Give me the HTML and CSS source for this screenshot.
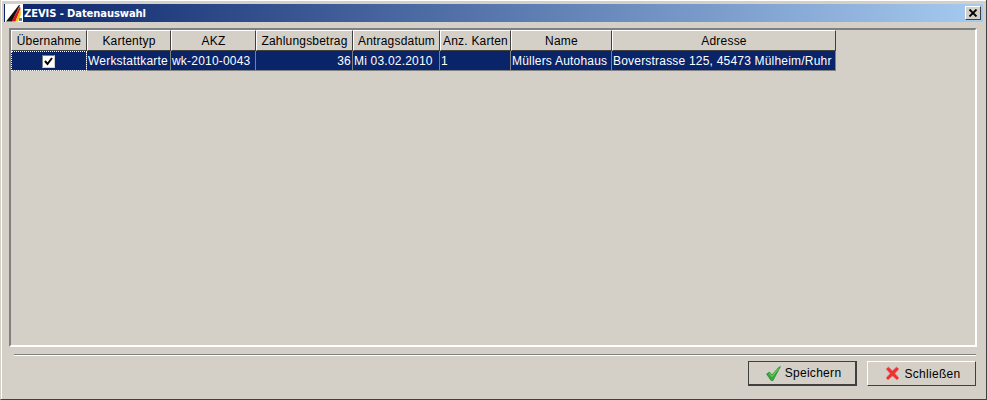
FILE: index.html
```html
<!DOCTYPE html>
<html lang="de">
<head>
<meta charset="utf-8">
<title>ZEVIS - Datenauswahl</title>
<link rel="stylesheet" href="styles.css">
</head>
<body>
<div class="window">
  <div class="titlebar">
    <svg class="logo" width="18" height="18" viewBox="0 0 18 18">
      <rect width="18" height="18" fill="#fff"/>
      <path d="M1 17.500L14 1L15 1L7 17.500Z" fill="#111"/>
      <path d="M6.500 17.500L15 2L15.500 5L10.500 17.500Z" fill="#d81818"/>
      <path d="M10.500 17.500L15.500 5L15.800 11L13 17.500Z" fill="#f0c810"/>
      <rect x="14" y="14" width="3" height="3" fill="#6a7a90"/>
    </svg>
    <span class="title">ZEVIS - Datenauswahl</span>
    <button class="close" type="button" aria-label="Schließen">
      <svg width="10" height="8" viewBox="0 0 10 8"><path d="M1.500 0.500L8.500 7.500M8.500 0.500L1.500 7.500" stroke="#000" stroke-width="1.800" fill="none"/></svg>
    </button>
  </div>
  <div class="content">
    <div class="panel">
      <table class="grid">
        <colgroup>
          <col class="c1"><col class="c2"><col class="c3"><col class="c4"><col class="c5"><col class="c6"><col class="c7"><col class="c8">
        </colgroup>
        <thead>
          <tr>
            <th>Übernahme</th><th>Kartentyp</th><th>AKZ</th><th>Zahlungsbetrag</th><th>Antragsdatum</th><th>Anz. Karten</th><th>Name</th><th>Adresse</th>
          </tr>
        </thead>
        <tbody>
          <tr>
            <td class="focus"><span class="check"><svg width="9" height="9" viewBox="0 0 9 9"><path d="M1 4L3.500 7L8 1" stroke="#000" stroke-width="2" fill="none"/></svg></span></td>
            <td>Werkstattkarte</td><td>wk-2010-0043</td><td class="num">36</td><td>Mi 03.02.2010</td><td>1</td><td>Müllers Autohaus</td><td>Boverstrasse 125, 45473 Mülheim/Ruhr</td>
          </tr>
        </tbody>
      </table>
    </div>
    <div class="separator"></div>
    <div class="actions">
      <button class="btn default" type="button">
        <svg width="15" height="15" viewBox="0 0 15 15"><path d="M0.500 8L3.500 6L6 9L12 2L14.500 0.500L7 14.500H5Z" fill="#38a838" stroke="#1f7f2a" stroke-width="0.600"/><path d="M3.500 7.500L6 10.500L12.500 2.500" stroke="#7ada6a" fill="none"/></svg>
        Speichern
      </button>
      <button class="btn" type="button">
        <svg width="15" height="15" viewBox="0 0 15 15"><path d="M1 3L3.500 1L7.500 4.800L11.500 1L14 3L10 7.500L14 12L12 14L7.500 10L3 14L1 12L5 7.500Z" fill="#ee3030" stroke="#e08080" stroke-width="0.600"/></svg>
        Schließen
      </button>
    </div>
  </div>
</div>
</body>
</html>
```
FILE: styles.css
```css
* { box-sizing: border-box; }
html, body { margin: 0; padding: 0; }
body {
  width: 987px;
  height: 400px;
  overflow: hidden;
  font-family: "Liberation Sans", Arial, sans-serif;
  font-size: 12px;
  letter-spacing: 0.2px;
  color: #000;
  background: #d4d0c8;
}
.window {
  width: 987px;
  height: 400px;
  display: flex;
  flex-direction: column;
  padding: 4px 3px 2px 3px;
  background: #d4d0c8;
  border-left: 1px solid #d4d0c8;
  border-bottom: 1px solid #404040;
  border-right: 1px solid #404040;
  box-shadow: inset 1px 1px 0 #fff;
}
.titlebar {
  height: 18px;
  display: flex;
  align-items: center;
  flex: none;
  padding-left: 1px;
  padding-right: 2px;
  background: linear-gradient(to right, #0a246a, #a6caf0);
}
.logo { flex: none; }
.title {
  margin-left: 1px;
  color: #fff;
  font-family: "DejaVu Sans", sans-serif;
  font-size: 10px;
  font-weight: bold;
  letter-spacing: -0.1px;
}
.close {
  margin-left: auto;
  width: 16px;
  height: 14px;
  padding: 0;
  display: flex;
  align-items: center;
  justify-content: center;
  background: #d4d0c8;
  border: 1px solid;
  border-color: #fff #404040 #404040 #fff;
}
.content {
  flex: 1;
  display: flex;
  flex-direction: column;
  padding: 6px 5px 0 5px;
}
.panel {
  width: 968px;
  height: 319px;
  flex: none;
  border: 2px solid;
  border-color: #808080 #fff #fff #808080;
}
.grid {
  border-collapse: separate;
  border-spacing: 0;
  table-layout: fixed;
  width: 825px;
}
.c1 { width: 76px; }
.c2 { width: 84px; }
.c3 { width: 85px; }
.c4 { width: 97px; }
.c5 { width: 87px; }
.c6 { width: 71px; }
.c7 { width: 101px; }
.c8 { width: 224px; }
th {
  height: 21px;
  padding: 0;
  font-weight: normal;
  text-align: center;
  white-space: nowrap;
  background: #d4d0c8;
  border: 1px solid;
  border-color: #fff #404040 #404040 #fff;
}
td {
  height: 20px;
  padding: 0 0 0 1px;
  color: #fff;
  white-space: nowrap;
  overflow: hidden;
  background: #0a246a;
  border-right: 1px solid #808080;
  border-bottom: 1px solid #808080;
}
td.num { text-align: right; padding-right: 1px; }
td.focus {
  padding: 0;
  text-align: center;
  outline: 1px dotted #fff;
  outline-offset: -1px;
}
.check {
  display: inline-flex;
  align-items: center;
  justify-content: center;
  width: 13px;
  height: 13px;
  vertical-align: middle;
  background: #fff;
  border: 1px solid;
  border-color: #808080 #d4d0c8 #d4d0c8 #808080;
}
.separator {
  flex: none;
  width: 962px;
  height: 2px;
  margin: 7px 0 0 5px;
  background: #808080;
  border-bottom: 1px solid #fff;
}
.actions {
  flex: none;
  display: flex;
  justify-content: flex-end;
  gap: 10px;
  padding: 5px 2px 0 0;
}
.btn {
  width: 109px;
  height: 25px;
  padding: 0 0 0 3px;
  display: flex;
  align-items: center;
  justify-content: center;
  gap: 4px;
  font: inherit;
  letter-spacing: 0.3px;
  color: #000;
  background: #d4d0c8;
  border: 1px solid;
  border-color: #fff #404040 #404040 #fff;
}
.btn.default {
  border-color: #404040;
  border-width: 1px 2px 2px 1px;
}
```
